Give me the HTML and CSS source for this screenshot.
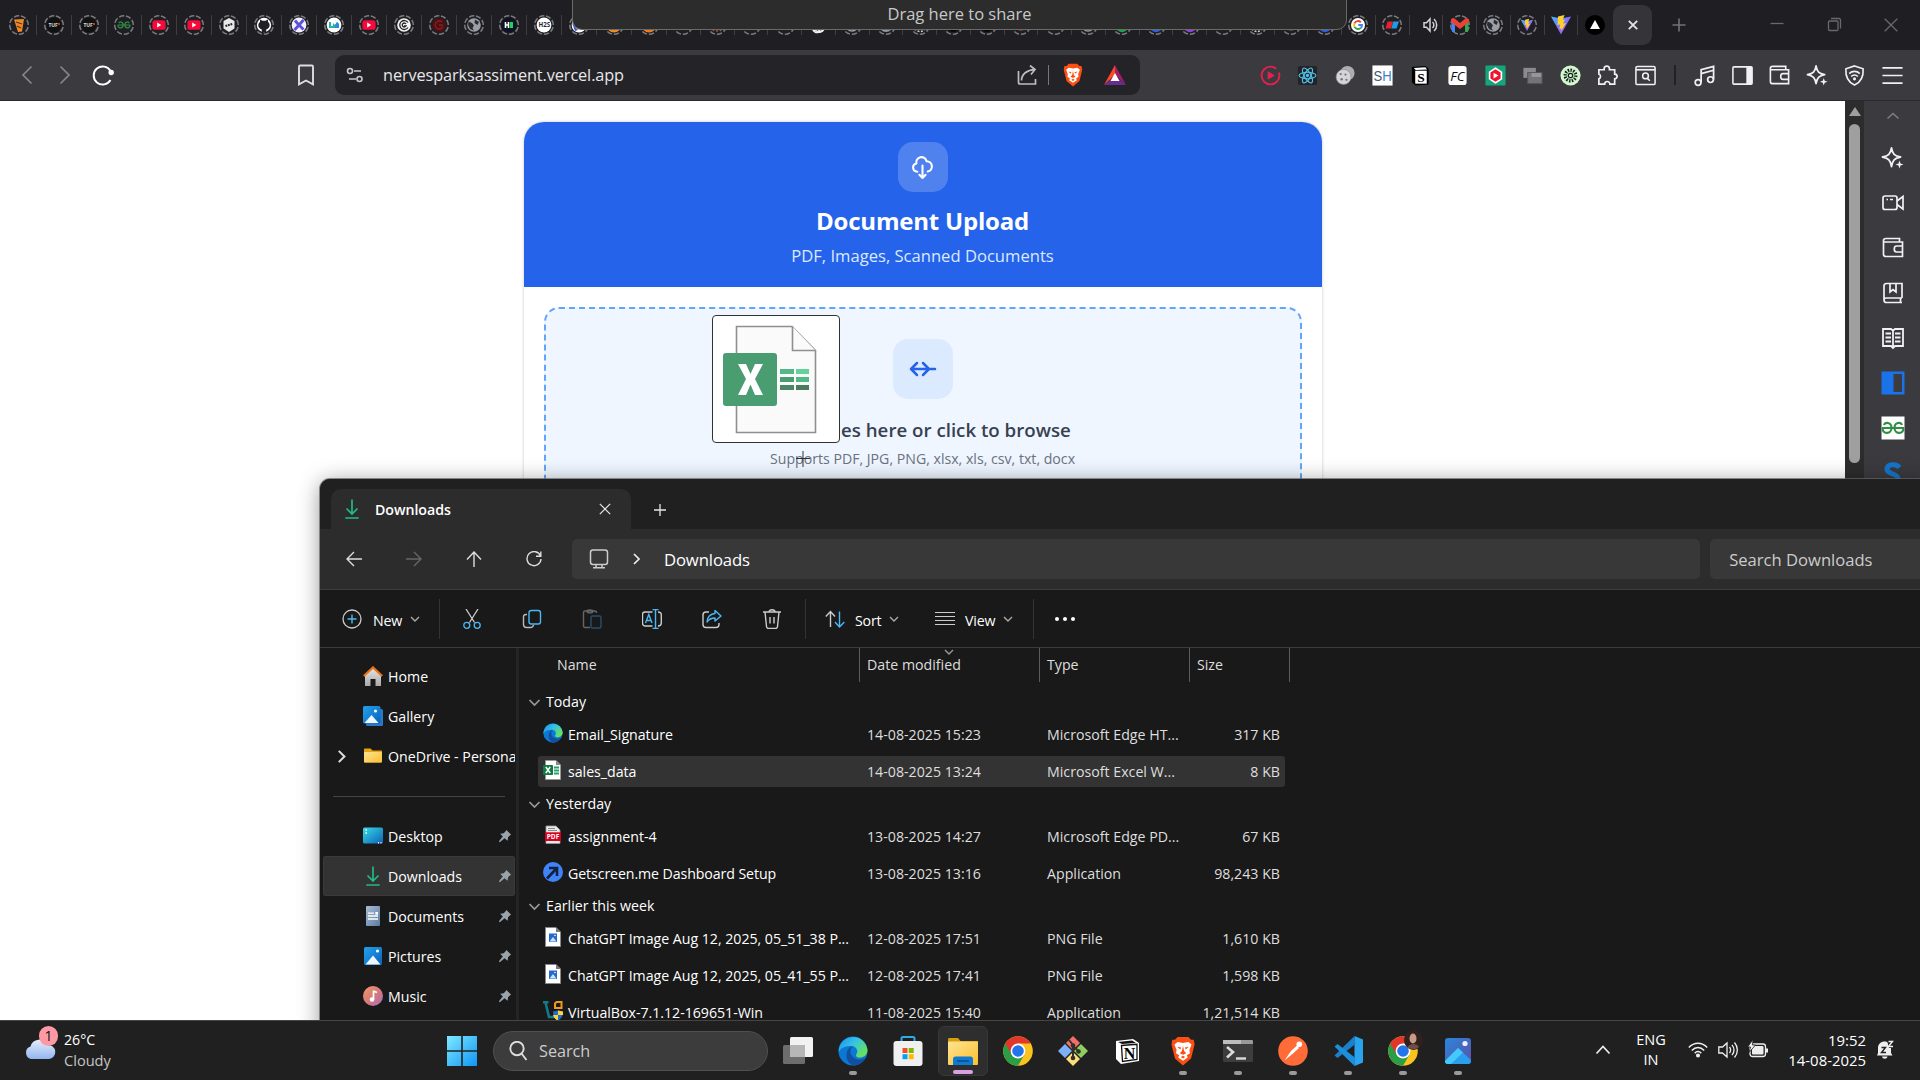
FILE: index.html
```html
<!DOCTYPE html>
<html lang="en">
<head>
<meta charset="utf-8">
<title>Document Upload</title>
<link rel="stylesheet" href="styles.css">
</head>
<body>
<svg class="defs" width="0" height="0" aria-hidden="true">
  <defs>
    <linearGradient id="gEdge" x1="0" y1="0" x2="1" y2=".6"><stop offset="0" stop-color="#1b8fe0"/><stop offset=".5" stop-color="#35c1e8"/><stop offset="1" stop-color="#66e35a"/></linearGradient>
    <linearGradient id="gBlue" x1="0" y1="0" x2="1" y2="1"><stop offset="0" stop-color="#22a2ee"/><stop offset="1" stop-color="#0a62b8"/></linearGradient>
    <linearGradient id="gDesk" x1="0" y1="0" x2="1" y2="1"><stop offset="0" stop-color="#37dbe6"/><stop offset="1" stop-color="#0b62b8"/></linearGradient>
    <linearGradient id="gFold" x1="0" y1="0" x2="1" y2="1"><stop offset="0" stop-color="#ffe394"/><stop offset="1" stop-color="#fbc02d"/></linearGradient>
    <linearGradient id="gDoc" x1="0" y1="0" x2="1" y2="1"><stop offset="0" stop-color="#a9bdd3"/><stop offset="1" stop-color="#5b7ba1"/></linearGradient>
    <linearGradient id="gMus" x1="0" y1="0" x2="1" y2="1"><stop offset="0" stop-color="#f29a66"/><stop offset=".5" stop-color="#d97a78"/><stop offset="1" stop-color="#a56bc0"/></linearGradient>
    <linearGradient id="gWin" x1="0" y1="0" x2="1" y2="1"><stop offset="0" stop-color="#7fe9ff"/><stop offset="1" stop-color="#1094f5"/></linearGradient>
    <linearGradient id="gVite" x1="0" y1="0" x2="1" y2="1"><stop offset="0" stop-color="#41b8ff"/><stop offset="1" stop-color="#bd34fe"/></linearGradient>
    <linearGradient id="gCloud" x1="0" y1="0" x2="0" y2="1"><stop offset="0" stop-color="#e4eefc"/><stop offset="1" stop-color="#93b5ef"/></linearGradient>
    <linearGradient id="gPho" x1="0" y1="0" x2="1" y2="1"><stop offset="0" stop-color="#2a86dc"/><stop offset="1" stop-color="#5d4fa6"/></linearGradient>
    <linearGradient id="gHouse" x1="0" y1="0" x2="0" y2="1"><stop offset="0" stop-color="#e6e6e6"/><stop offset="1" stop-color="#a8a8a8"/></linearGradient>
    <symbol id="ring" viewBox="-12 -12 24 24"><circle r="9.3" fill="none" stroke="#7b7b80" stroke-width="1.5" stroke-dasharray="5.3 2" transform="rotate(-78)"/></symbol>
    <symbol id="yt" viewBox="-12 -12 24 24"><use href="#ring" x="-12" y="-12" width="24" height="24"/><rect x="-6.6" y="-4.8" width="13.2" height="9.6" rx="2.6" fill="#f8093c"/><path d="M-1.8-2.4 2.3 0-1.8 2.4Z" fill="#fff"/></symbol>
    <symbol id="tuf" viewBox="-12 -12 24 24"><use href="#ring" x="-12" y="-12" width="24" height="24"/><circle r="7.6" fill="#111"/><text x="-5.6" y="2" font-size="5" font-weight="700" fill="#ddd" font-family="Open Sans,sans-serif">TUF</text><circle cx="5" cy="-1" r=".9" fill="#f55a2a"/></symbol>
    <symbol id="globe" viewBox="-12 -12 24 24"><use href="#ring" x="-12" y="-12" width="24" height="24"/><circle r="6.8" fill="#9aa0a6"/><path d="M-5.500-3.500-2-2 0 .5-1.500 3 0 5.800-4 4-6 0ZM1-5.500 5-3 3.500 0 .5-2Z" fill="#2a2a30"/></symbol>
    <symbol id="vite" viewBox="-12 -12 24 24"><path d="M-10-8.500 0 9.500 10-8.500 0-6.500Z" fill="url(#gVite)"/><path d="M3.500-10-3-8.500-3.500 0-.8-.6-1.600 4 .6 3.400-.4 7 5-2 2-1.500 4-5.500 1.800-5Z" fill="#ffd028"/></symbol>
    <symbol id="brave" viewBox="-12 -14 24 28"><path d="M-5-13H5L7.500-10.500 10-10.500 10.800-6 9.800-2 7.500 7 0 13.500-7.500 7-9.800-2-10.800-6-10-10.500-7.500-10.500Z" fill="#fb4f13"/><path d="M-8-6-5-8.500 0-7.500 5-8.500 8-6 6-1 6.500 2 3.500 4 4.500 6 0 9-4.500 6-3.500 4-6.500 2-6-1Z" fill="#fff"/><path d="M-5.500-4-1.800-3.200-2.500-1.500ZM5.500-4 1.800-3.200 2.500-1.500ZM0-5 1 0 3 2 0 3.500-3 2-1 0ZM-2 5.500 0 4.500 2 5.500 0 7Z" fill="#fb4f13"/></symbol>
    <symbol id="edge" viewBox="0 0 30 30"><circle cx="15" cy="15" r="14.500" fill="#0b78d6"/><path d="M.8 13A14.500 14.500 0 0 1 29.500 14c0 5-4 7.500-8 7.500-3.500 0-4-2-3-3.500 2.200-3.500-.5-7.800-5-8C7 9.600 2.500 12 .8 16Z" fill="url(#gEdge)"/><path d="M8.500 18c.5-5 4-7.500 6.500-7.800-4 2.800-3.500 10 3 12.800 3.500 1.300 7 .3 9.500-1.500C25 27 20 29.600 15.500 29.500 11 28.500 8 23.500 8.500 18Z" fill="#134f9f"/></symbol>
    <symbol id="chrome" viewBox="-15 -15 30 30"><circle r="14.800" fill="#fbc31c"/><path d="M-12.800-7.400A14.800 14.800 0 0 0 0 14.800L6.400 3.700 0 0Z" fill="#2a9d47"/><path d="M-12.800-7.400A14.800 14.800 0 0 1 12.800-7.400H0L-6.400 3.700Z" fill="#e0362c"/><circle r="7.400" fill="#fff"/><circle r="5.800" fill="#2374ea"/></symbol>
    <symbol id="star" viewBox="0 0 24 24"><path d="M10.500 2C11.500 8 13.500 10 19.500 11 13.500 12 11.500 14.500 10.500 20.500 9.500 14.500 7.500 12 1.500 11 7.500 10 9.500 8 10.500 2Z" fill="none" stroke="#f1f1f3" stroke-width="1.800" stroke-linejoin="round"/><path d="M18.500 14.500 19.500 17.500 22.500 18.500 19.500 19.500 18.500 22.500 17.500 19.500 14.500 18.500 17.500 17.500Z" fill="#f1f1f3"/></symbol>
    <symbol id="wallet" viewBox="0 0 24 24"><path d="M2.500 4.500C2.500 3 3.500 2.500 5 2.500H18.500V6H21.500V20.500H5C3.500 20.500 2.500 20 2.500 18.500ZM3 6H18.500M21.500 10H15.500C12.500 10 12.500 16 15.500 16H21.500" fill="none" stroke="#f1f1f3" stroke-width="1.700"/></symbol>
    <symbol id="gfg" viewBox="0 0 24 24"><path d="M1 12H23M10.500 12C10.500 5.500 4 6 3 9M13.500 12C13.500 5.500 20 6 21 9M1.500 12C2 19 10.500 18 10.500 12M22.500 12C22 19 13.500 18 13.500 12" fill="none" stroke="#2f8d46" stroke-width="2.100"/></symbol>
    <symbol id="down" viewBox="0 0 20 20"><path d="M10 .5V14.500M4.500 9.500 10 15 15.500 9.500M3.300 19H16.700" fill="none" stroke="#22b98b" stroke-width="1.700"/></symbol>
    <symbol id="pic" viewBox="0 0 20 20"><rect x="1" y="1" width="18" height="18" rx="1.500" fill="url(#gBlue)"/><path d="M2.500 18.500 10 9.500 17.500 18.500Z" fill="#eef7ff"/><circle cx="14.500" cy="5" r="1.600" fill="#fff"/></symbol>
    <symbol id="pin" viewBox="0 0 16 16"><path d="M9.500 1 15 6.500 13.500 7.500 11.500 9.500 11 13.500 7.500 10.500 2 15 1 14 5.500 8.500 2.500 5.500 6.500 4.800 8.500 2.800Z" fill="#9aa3aa"/></symbol>
    <symbol id="png" viewBox="0 0 20 20"><path d="M2.500.5H13L17.500 5V19.500H2.500Z" fill="#fff" stroke="#888"/><path d="M13 .5V5H17.500Z" fill="#777"/><rect x="6" y="6.500" width="8" height="8.500" fill="#2368cb"/><path d="M6.500 14.500 10 10 13.500 14.500Z" fill="#cbe5ff"/><circle cx="12" cy="8.500" r=".8" fill="#fff"/></symbol>
    <symbol id="chev" viewBox="0 0 12 12"><path d="M2 4 6 8 10 4" fill="none" stroke="currentColor" stroke-width="1.400"/></symbol>
  </defs>
</svg>

<main class="desktop">
  <section class="browser">
    <div class="tabstrip">
      <div class="tab"><svg viewBox="-12 -12 24 24"><use href="#ring" x="-12" y="-12" width="24" height="24"/><path d="M-5-5.500 5-6 3 6.500-1 7Z" fill="#f08a24"/><path d="M-3-3 3-1M-2 1 2 3" stroke="#5a3320" stroke-width="1.300"/></svg></div>
      <div class="tab"><svg><use href="#tuf"/></svg></div>
      <div class="tab"><svg><use href="#tuf"/></svg></div>
      <div class="tab"><svg viewBox="-12 -12 24 24"><use href="#ring" x="-12" y="-12" width="24" height="24"/><use href="#gfg" x="-7" y="-7" width="14" height="14"/></svg></div>
      <div class="tab"><svg><use href="#yt"/></svg></div>
      <div class="tab"><svg><use href="#yt"/></svg></div>
      <div class="tab"><svg viewBox="-12 -12 24 24"><use href="#ring" x="-12" y="-12" width="24" height="24"/><path d="M0-7 5.500-4V3.500L0 7-5.500 3.500V-4Z" fill="#e8e8e8"/><path d="M-3.500 1 3.500-1" stroke="#222" stroke-width="2" stroke-dasharray="1.800 .8"/></svg></div>
      <div class="tab"><svg viewBox="-12 -12 24 24"><use href="#ring" x="-12" y="-12" width="24" height="24"/><circle r="7.200" fill="#fff"/><path d="M-2.200 7V4.500C-7 3-6-2-4-3L-4-5.500-1.500-4.200H1.500L4-5.500 4-3C6-2 7 3 2.200 4.500V7Z" fill="#202025"/></svg></div>
      <div class="tab"><svg viewBox="-12 -12 24 24"><use href="#ring" x="-12" y="-12" width="24" height="24"/><circle r="7.400" fill="#f3f1ff"/><path d="M-4.500 5 4.500-5M-4-4.500-1-1M1 1 4.500 4.500" stroke="#5b50d8" stroke-width="2.800"/></svg></div>
      <div class="tab"><svg viewBox="-12 -12 24 24"><use href="#ring" x="-12" y="-12" width="24" height="24"/><circle r="7.400" fill="#fff"/><path d="M-5 3V-3H-3V1H-1V-2L1 0 3-3 5-1V3Z" fill="#27b3a8"/><path d="M1 0 3-3 5-1V3H1Z" fill="#2b8be0"/></svg></div>
      <div class="tab"><svg><use href="#yt"/></svg></div>
      <div class="tab"><svg viewBox="-12 -12 24 24"><use href="#ring" x="-12" y="-12" width="24" height="24"/><circle r="6.800" fill="#f4f4f4"/><path d="M4-2.500A4.500 4.500 0 1 0 4 2.500M2-1A2 2 0 1 0 2 1H0" fill="none" stroke="#222" stroke-width="1.300"/></svg></div>
      <div class="tab"><svg viewBox="-12 -12 24 24"><use href="#ring" x="-12" y="-12" width="24" height="24"/><circle r="7" fill="#4b1113"/><path d="M3-3A4 4 0 1 0 3 3V0H0" fill="none" stroke="#8c1c20" stroke-width="1.300"/></svg></div>
      <div class="tab"><svg><use href="#globe"/></svg></div>
      <div class="tab"><svg viewBox="-12 -12 24 24"><use href="#ring" x="-12" y="-12" width="24" height="24"/><circle r="7.500" fill="#0b1420"/><path d="M-3.500-3V3M-.5-3V3M-3.500 0H-.5" stroke="#fff" stroke-width="1.600"/><rect x="1" y="-3" width="3" height="6" fill="#21d35d"/></svg></div>
      <div class="tab"><svg viewBox="-12 -12 24 24"><use href="#ring" x="-12" y="-12" width="24" height="24"/><circle r="7.400" fill="#fff"/><text x="-5.600" y="2.400" font-size="6.200" font-weight="700" fill="#26263a" font-family="Open Sans,sans-serif">H2S</text></svg></div>
      <div class="tab"><svg viewBox="-12 -12 24 24"><use href="#ring" x="-12" y="-12" width="24" height="24"/><circle r="7.400" fill="#fff"/><path d="M-7-2-1 5-4 6Z" fill="#3b5bc4"/></svg></div>
      <div class="tab"><svg viewBox="-12 -12 24 24"><use href="#ring" x="-12" y="-12" width="24" height="24"/><circle r="7.400" fill="#f28b1e"/></svg></div>
      <div class="tab"><svg viewBox="-12 -12 24 24"><use href="#ring" x="-12" y="-12" width="24" height="24"/><circle r="7.400" fill="#ee7a1e"/></svg></div>
      <div class="tab slim"><svg><use href="#ring"/></svg></div>
      <div class="tab slim"><svg viewBox="-12 -12 24 24"><use href="#ring" x="-12" y="-12" width="24" height="24"/><path d="M0 0-4 6M0 0 0 7M0 0 4 6" stroke="#a4563b" stroke-width="1.500"/></svg></div>
      <div class="tab slim"><svg><use href="#ring"/></svg></div>
      <div class="tab slim"><svg viewBox="-12 -12 24 24"><use href="#ring" x="-12" y="-12" width="24" height="24"/><rect x="-6" y="-5" width="12" height="10" rx="2" fill="#b93a55"/></svg></div>
      <div class="tab slim"><svg viewBox="-12 -12 24 24"><path d="M-5 3A4 4 0 0 0 1 7 4 4 0 0 0 6 3M-2 3 2 6M-5 0A6 6 0 0 0 5 5" fill="none" stroke="#eee" stroke-width="1.500"/></svg></div>
      <div class="tab slim"><svg><use href="#globe"/></svg></div>
      <div class="tab slim"><svg viewBox="-12 -12 24 24"><use href="#ring" x="-12" y="-12" width="24" height="24"/><circle r="7" fill="#8d99a4"/><circle cx="-1" cy="1" r="4" fill="#202025"/></svg></div>
      <div class="tab slim"><svg viewBox="-12 -12 24 24"><use href="#ring" x="-12" y="-12" width="24" height="24"/><circle r="6.500" fill="none" stroke="#ccc" stroke-width="1.500" stroke-dasharray="2 1.500"/></svg></div>
      <div class="tab slim"><svg viewBox="-12 -12 24 24"><use href="#ring" x="-12" y="-12" width="24" height="24"/><circle r="7" fill="#080808"/></svg></div>
      <div class="tab slim"><svg viewBox="-12 -12 24 24"><use href="#ring" x="-12" y="-12" width="24" height="24"/><circle r="7" fill="#080808"/></svg></div>
      <div class="tab slim"><svg viewBox="-12 -12 24 24"><use href="#ring" x="-12" y="-12" width="24" height="24"/><circle r="5.500" fill="#ad6c43"/></svg></div>
      <div class="tab slim"><svg><use href="#ring"/></svg></div>
      <div class="tab slim"><svg viewBox="-12 -12 24 24"><use href="#ring" x="-12" y="-12" width="24" height="24"/><circle r="6" fill="none" stroke="#999" stroke-width="1.500"/></svg></div>
      <div class="tab slim"><svg viewBox="-12 -12 24 24"><use href="#ring" x="-12" y="-12" width="24" height="24"/><circle r="7.200" fill="#1aa64a"/></svg></div>
      <div class="tab slim"><svg viewBox="-12 -12 24 24"><use href="#ring" x="-12" y="-12" width="24" height="24"/><circle r="7.200" fill="#2b62e6"/></svg></div>
      <div class="tab slim"><svg viewBox="-12 -12 24 24"><use href="#ring" x="-12" y="-12" width="24" height="24"/><circle r="7.200" fill="#9a3be8"/></svg></div>
      <div class="tab slim"><svg><use href="#ring"/></svg></div>
      <div class="tab slim"><svg viewBox="-12 -12 24 24"><use href="#ring" x="-12" y="-12" width="24" height="24"/><circle r="6.500" fill="none" stroke="#ccc" stroke-width="1.500" stroke-dasharray="2 1.500"/></svg></div>
      <div class="tab slim"><svg viewBox="-12 -12 24 24"><use href="#ring" x="-12" y="-12" width="24" height="24"/><circle r="5.500" fill="#ad6c43"/></svg></div>
      <div class="tab slim"><svg viewBox="-12 -12 24 24"><use href="#ring" x="-12" y="-12" width="24" height="24"/><circle r="7.200" fill="#2b62e6"/></svg></div>
      <div class="tab slim"><svg viewBox="-12 -12 24 24"><use href="#ring" x="-12" y="-12" width="24" height="24"/><circle r="7" fill="#fff"/><g fill="none" stroke-width="1.900"><path d="M2.800-2.800A4 4 0 0 0-3.600-1.700" stroke="#ea4335"/><path d="M-3.600-1.700A4 4 0 0 0-3.400 2" stroke="#fbbc05"/><path d="M-3.400 2A4 4 0 0 0 2.700 3" stroke="#34a853"/><path d="M2.700 3A4 4 0 0 0 4 0H.3" stroke="#4285f4"/></g></svg></div>
      <div class="tab slim"><svg viewBox="-12 -12 24 24"><use href="#ring" x="-12" y="-12" width="24" height="24"/><path d="M-4.500-3.500H1L-1 3.500H-6.500Z" fill="#e3222c"/><path d="M1.300-3.500H7L4.500 3.500H-.7Z" fill="#1c9be6"/></svg></div>
      <div class="tab slim audio"><svg viewBox="-12 -12 24 24" fill="none" stroke="#d2d2d6" stroke-width="1.500"><path d="M-6-2.200H-3.500L0-6V6L-3.500 2.200H-6ZM2.500-3A4 4 0 0 1 2.500 3M4-6A8 8 0 0 1 4 6"/></svg></div>
      <div class="tab slim"><svg viewBox="-12 -12 24 24"><use href="#ring" x="-12" y="-12" width="24" height="24"/><path d="M-9-5-5-2V7H-8Z" fill="#4285f4"/><path d="M9-5 5-2V7H8Z" fill="#34a853"/><path d="M-9-6-6-7 0-2 6-7 9-6V-3L0 4-9-3Z" fill="#ea4335"/></svg></div>
      <div class="tab slim"><svg><use href="#globe"/></svg></div>
      <div class="tab slim"><svg viewBox="-12 -12 24 24"><use href="#ring" x="-12" y="-12" width="24" height="24"/><use href="#vite" x="-7.500" y="-7.500" width="15" height="15"/></svg></div>
      <div class="tab slim"><svg><use href="#vite"/></svg></div>
      <div class="tab slim last"><svg viewBox="-12 -12 24 24"><circle r="10" fill="#000"/><path d="M0-5 5 4H-5Z" fill="#fff"/></svg></div>
      <div class="tab active"><svg viewBox="-12 -12 24 24"><path d="M-4.200-4.200 4.200 4.200M4.200-4.200-4.200 4.200" stroke="#e2e2e5" stroke-width="1.900"/></svg></div>
      <div class="newtab"><svg viewBox="-12 -12 24 24"><path d="M-6.500 0H6.500M0-6.500V6.500" stroke="#737377" stroke-width="1.600"/></svg></div>
      <div class="winctl"><svg viewBox="-12 -12 24 24"><path d="M-6.500-1.500H6.500" stroke="#68686d" stroke-width="1.300"/></svg><svg viewBox="-12 -12 24 24" fill="none" stroke="#68686d" stroke-width="1.300"><rect x="-5.500" y="-4" width="9.500" height="9.500" rx="1"/><path d="M-3-6.500H5C6 -6.500 6.500-6 6.500-5V3.500"/></svg><svg viewBox="-12 -12 24 24"><path d="M-6.300-6.300 6.300 6.300M6.300-6.300-6.300 6.300" stroke="#68686d" stroke-width="1.300"/></svg></div>
    </div>

    <div class="toolbar">
      <div class="nav-buttons">
        <svg viewBox="-12 -12 24 24"><path d="M4.500-8.500-4 0 4.500 8.500" fill="none" stroke="#85858a" stroke-width="1.700"/></svg>
        <svg viewBox="-12 -12 24 24"><path d="M-4.500-8.500 4 0-4.500 8.500" fill="none" stroke="#85858a" stroke-width="1.700"/></svg>
        <svg viewBox="-12 -12 24 24"><path d="M7.500-4A9 9 0 1 0 7.500 5" fill="none" stroke="#fff" stroke-width="2"/><circle cx="8.200" cy="-2.500" r="2.700" fill="#fff"/></svg>
        <svg class="bookmark" viewBox="-12 -12 24 24"><path d="M-6-9.500H6C7-9.500 7-9 7-8V9.300L0 5.500-7 9.300V-8C-7-9-7-9.500-6-9.500Z" fill="none" stroke="#dedee2" stroke-width="1.900"/></svg>
      </div>
      <div class="urlbar">
        <svg class="site" viewBox="0 0 20 20" fill="none" stroke="#c8c8cc" stroke-width="1.600"><circle cx="5" cy="6" r="2.500"/><path d="M9 6H16M4 14H11"/><circle cx="14.500" cy="14" r="2.500"/></svg>
        <span class="url">nervesparksassiment.vercel.app</span>
        <svg class="share" viewBox="0 0 20 20" fill="none" stroke="#bdbdc2" stroke-width="1.700"><path d="M1.500 6V17C1.500 18.500 2 19 3 19H18.500V14M4.500 15.500C4.500 9 10 5 18 4.500M13 .5 18 4.500 14 9.500"/></svg>
        <i class="vsep"></i>
        <svg class="lion"><use href="#brave"/></svg>
        <svg class="bat" viewBox="0 0 24 24"><path d="M12 2 1 22 12 12Z" fill="#ff4724"/><path d="M12 2 23 22 12 12Z" fill="#9e1f63"/><path d="M1 22H23L12 13Z" fill="#662d91"/><path d="M12 10 16.500 18H7.500Z" fill="#fff"/></svg>
      </div>
      <div class="extensions">
        <span><svg viewBox="0 0 24 24"><circle cx="12" cy="12" r="9.300" fill="none" stroke="#e3204f" stroke-width="2" stroke-dasharray="50 5"/><path d="M9 7.500 16.500 12 9 16.500Z" fill="#e3204f"/></svg></span>
        <span><svg viewBox="0 0 24 24"><rect x="2" y="2" width="20" height="20" rx="2" fill="#23232a"/><g fill="none" stroke="#4fc3e8" stroke-width="1.200"><ellipse cx="12" cy="12" rx="8.800" ry="3.400"/><ellipse cx="12" cy="12" rx="8.800" ry="3.400" transform="rotate(60 12 12)"/><ellipse cx="12" cy="12" rx="8.800" ry="3.400" transform="rotate(120 12 12)"/></g><circle cx="12" cy="12" r="1.700" fill="#4fc3e8"/></svg></span>
        <span><svg viewBox="0 0 24 24"><circle cx="14" cy="9.500" r="7.500" fill="#aeaeb0"/><circle cx="10" cy="13.500" r="7.800" fill="#d5d5d7" stroke="#8a8a8e" stroke-width=".6"/><g fill="#77777b"><circle cx="7" cy="10.500" r="1.200"/><circle cx="12" cy="11" r="1.200"/><circle cx="8" cy="16" r="1.300"/><circle cx="13" cy="16.500" r="1.200"/></g></svg></span>
        <span><svg viewBox="0 0 24 24"><rect x="1.500" y="1.500" width="21" height="21" fill="#fff"/><text x="12" y="18" text-anchor="middle" font-size="16" textLength="19" lengthAdjust="spacingAndGlyphs" fill="#44586c" font-family="Liberation Sans,sans-serif">S<tspan fill="#3f7fc1">H</tspan></text></svg></span>
        <span><svg viewBox="0 0 24 24"><path d="M3 3 17 2 20.500 5V21.500L7 22.500 3 19Z" fill="#000"/><rect x="6.500" y="7" width="12" height="13.500" fill="#fff"/><path d="M5 4.200 17 3.500 19 5.700 7 6.200Z" fill="#fff"/><text x="12.500" y="18.700" text-anchor="middle" font-size="14" font-weight="700" font-family="Liberation Serif,serif">S</text></svg></span>
        <span><svg viewBox="0 0 24 24"><rect x="2.500" y="2" width="19" height="20" rx="3" fill="#fff"/><text x="12" y="17.500" text-anchor="middle" font-size="14" font-style="italic" fill="#111" font-family="Open Sans,sans-serif">FC</text></svg></span>
        <span><svg viewBox="0 0 24 24"><rect x="1.500" y="1.500" width="21" height="21" rx="1" fill="#16a47d"/><path d="M12 3.500 19 8V16L12 20.500 5 16V8Z" fill="#fff"/><path d="M12 5.500 17.300 8.800V15.200L12 18.500 6.700 15.200V8.800Z" fill="#f0142e"/><path d="M10 9 15 12 10 15Z" fill="#fff"/></svg></span>
        <span><svg viewBox="0 0 24 24"><rect x="2.500" y="4" width="13" height="10.500" fill="#8b8b8d"/><rect x="7" y="9" width="15" height="11.500" fill="#747476" stroke="#555" stroke-width="1"/><rect x="11" y="9.500" width="10" height="4" fill="#98989a"/></svg></span>
        <span><svg viewBox="0 0 24 24"><circle cx="12" cy="12" r="10.500" fill="#d3f5d0"/><circle cx="12" cy="12" r="5.500" fill="none" stroke="#14231a" stroke-width="3.500" stroke-dasharray="1.500 1.300"/><circle cx="12" cy="12" r="2.300" fill="none" stroke="#14231a" stroke-width="1.300"/></svg></span>
        <span><svg viewBox="0 0 24 24"><path d="M3 6H8.500V4.500A2.800 2.800 0 0 1 14 4.500V6H19.500V10.500A2.300 2.300 0 0 1 19.500 15.500V21H14.500A2.500 2.500 0 0 0 9 21H3V15.500A2.700 2.700 0 0 0 3 10.500Z" fill="none" stroke="#f1f1f3" stroke-width="1.800"/></svg></span>
        <span><svg viewBox="0 0 24 24"><rect x="2" y="2.500" width="20" height="19" rx="1.500" fill="none" stroke="#f1f1f3" stroke-width="1.600"/><path d="M2 6H22" stroke="#f1f1f3" stroke-width="1.800"/><circle cx="12" cy="12.500" r="3" fill="none" stroke="#f1f1f3" stroke-width="1.600"/><path d="M14 15 16.500 17.500" stroke="#f1f1f3" stroke-width="1.600"/></svg></span>
        <i class="tsep"></i>
        <span><svg viewBox="0 0 24 24" fill="none" stroke="#f1f1f3" stroke-width="1.800"><path d="M8.500 19V6L21.500 2.500V16M8.500 10 21.500 6.500"/><circle cx="5.300" cy="19.300" r="3"/><circle cx="18.300" cy="16.300" r="3"/></svg></span>
        <span><svg viewBox="0 0 24 24"><rect x="2" y="3" width="20" height="18" rx="1" fill="none" stroke="#f1f1f3" stroke-width="1.600"/><rect x="16" y="3" width="6" height="18" fill="#f1f1f3"/></svg></span>
        <span><svg><use href="#wallet"/></svg></span>
        <span><svg><use href="#star"/></svg></span>
        <span><svg viewBox="0 0 24 24" fill="none" stroke="#f1f1f3" stroke-width="1.700"><path d="M12 2 21 5C21.500 13 19 19 12 22 5 19 2.500 13 3 5Z"/><path d="M6.500 10C9.500 7 14.500 7 17.500 10M8.500 13C10.500 11 13.500 11 15.500 13"/><circle cx="12" cy="15.500" r=".8"/></svg></span>
        <span><svg viewBox="0 0 24 24"><path d="M1.500 4H22.500M1.500 12H22.500M1.500 20H22.500" stroke="#f1f1f3" stroke-width="1.700"/></svg></span>
      </div>
    </div>

    <div class="viewport">
      <div class="page">
        <div class="card">
          <header class="card-head">
            <div class="head-icon"><svg viewBox="0 0 24 24" fill="none" stroke="#fff" stroke-width="2" stroke-linecap="round" stroke-linejoin="round"><path d="M7 16a4 4 0 0 1-.88-7.903A5 5 0 1 1 15.900 6H16a5 5 0 0 1 1 9.900M9 19l3 3m0 0 3-3m-3 3V10"/></svg></div>
            <h1>Document Upload</h1>
            <p>PDF, Images, Scanned Documents</p>
          </header>
          <div class="dropzone">
            <div class="drop-icon"><svg viewBox="0 0 28 24" fill="none" stroke="#2563eb" stroke-width="2.500" stroke-linecap="round" stroke-linejoin="round"><path d="M2 12H26M8 6 2 12 8 18M14 6 20 12 14 18"/></svg></div>
            <p class="drop-title">Drop files here or click to browse</p>
            <p class="drop-hint">Supports PDF, JPG, PNG, xlsx, xls, csv, txt, docx</p>
          </div>
        </div>
      </div>
      <div class="scroll"><i class="arrow"></i><i class="thumb"></i></div>
      <aside class="side">
        <svg class="up" viewBox="0 0 24 24"><path d="M6.500 14.500 12 9.500 17.500 14.500" fill="none" stroke="#7e7e83" stroke-width="1.500"/></svg>
        <svg><use href="#star"/></svg>
        <svg viewBox="0 0 24 24" fill="none" stroke="#f1f1f3" stroke-width="1.700"><rect x="2" y="5" width="14" height="13.500" rx="2"/><path d="M16 10 22 5.500V18L16 13.500M5.500 8.500H7M9 8.500H12"/></svg>
        <svg><use href="#wallet"/></svg>
        <svg viewBox="0 0 24 24" fill="none" stroke="#f1f1f3" stroke-width="1.700"><path d="M21 17V2.500H5.500C4 2.500 3 3.500 3 5V19C3 20.500 4 21.500 5.500 21.500H21M3 19C3 17.500 4 17 5.500 17H21M19.500 17V21.500M9 2.500V11L12 8.500 15 11V2.500"/></svg>
        <svg viewBox="0 0 24 24" fill="none" stroke="#f1f1f3" stroke-width="1.800"><path d="M2 3H10L12 4.500 14 3H22V20H14L12 22 10 20H2ZM12 4V22M4.500 7.500H10M4.500 11.500H10M4.500 15.500H10M14 7.500H19.500M14 11.500H19.500M14 15.500H19.500"/></svg>
        <svg viewBox="0 0 24 24"><rect x=".5" y=".5" width="23" height="23" fill="#1a73e8"/><rect x="12.500" y="3" width="8.500" height="18" fill="#3b3b40"/></svg>
        <svg viewBox="0 0 24 24"><rect x=".5" y=".5" width="23" height="23" fill="#fff"/><use href="#gfg" width="24" height="24"/></svg>
        <svg class="s" viewBox="0 0 24 24"><path d="M18.500 5.500C15 1 6 2 6 7.500 6 12.500 17 11 17 16.500 17 21 9 22 5 17.500" fill="none" stroke="#1674c9" stroke-width="5"/></svg>
      </aside>
    </div>
  </section>

  <div class="share-drop">Drag here to share</div>

  <div class="drag-ghost">
    <svg viewBox="0 0 128 128"><path d="M24.500 11.500H80L103.500 35.500V117.500H24.500Z" fill="#fafafa" stroke="#8f8f8f" stroke-width="1.600"/><path d="M80.500 11.500V35.500H103.500" fill="#fafafa" stroke="#8f8f8f" stroke-width="1.600"/><rect x="11" y="38" width="54" height="53" rx="3" fill="#4a9d71"/><path d="M26 49H34L38.500 59 43 49H51L43 64 51 80H43L38.500 69.500 34 80H26L34 64Z" fill="#fff"/><g><rect x="68" y="54" width="14" height="5" fill="#53b888"/><rect x="84" y="54" width="13" height="5" fill="#64d19c"/><rect x="68" y="62" width="14" height="5" fill="#4a9d71"/><rect x="84" y="62" width="13" height="5" fill="#53b888"/><rect x="68" y="70" width="14" height="5" fill="#4d8568"/><rect x="84" y="70" width="13" height="5" fill="#4b7a60"/></g></svg>
  </div>
  <svg class="cursor" viewBox="0 0 16 16"><path d="M8 0V16M1 7.500H15" stroke="#333" stroke-width="1"/></svg>

  <section class="explorer">
    <div class="ex-tabs">
      <div class="ex-tab"><svg class="i20"><use href="#down"/></svg><b>Downloads</b><svg class="close" viewBox="0 0 12 12"><path d="M.8.8 11.200 11.200M11.200.8.8 11.200" stroke="#e6e6e6" stroke-width="1.200"/></svg></div>
      <svg class="plus" viewBox="0 0 12 12"><path d="M6 0V12M0 6H12" stroke="#e6e6e6" stroke-width="1.300"/></svg>
    </div>
    <div class="ex-nav">
      <span><svg viewBox="0 0 16 16"><path d="M16 8H1.500M8 1 1 8 8 15" fill="none" stroke="#ddd" stroke-width="1.400"/></svg></span>
      <span><svg viewBox="0 0 16 16"><path d="M0 8H14.500M8 1 15 8 8 15" fill="none" stroke="#666" stroke-width="1.400"/></svg></span>
      <span><svg viewBox="0 0 16 16"><path d="M8 16V1.500M1 8.500 8 1 15 8.500" fill="none" stroke="#ddd" stroke-width="1.400"/></svg></span>
      <span><svg viewBox="0 0 16 16"><path d="M14.500 5A7 7 0 1 0 15 8M14.800.5V5.300H10" fill="none" stroke="#ddd" stroke-width="1.400"/></svg></span>
      <div class="address"><svg class="i20" viewBox="0 0 20 20" fill="none" stroke="#ccc" stroke-width="1.500"><rect x="1.500" y="1" width="17" height="14.500" rx="2.500"/><path d="M7 15.500V18.500M13 15.500V18.500M4 18.800H16"/></svg><svg class="crumb" viewBox="0 0 12 12"><path d="M4 1 9 6 4 11" fill="none" stroke="#eee" stroke-width="1.700"/></svg><em>Downloads</em></div>
      <div class="search">Search Downloads</div>
    </div>
    <div class="ex-cmd">
      <div class="grp new"><svg class="i20" viewBox="0 0 20 20" fill="none"><circle cx="10" cy="10" r="9" stroke="#ccc" stroke-width="1.300"/><path d="M10 5.500V14.500M5.500 10H14.500" stroke="#4cb8f5" stroke-width="1.400"/></svg><label>New</label><svg class="c"><use href="#chev"/></svg></div>
      <i class="bar"></i>
      <span class="first"><svg viewBox="0 0 20 20" fill="none" stroke-width="1.300"><path d="M4 0 12.500 13.500M16 0 7.500 13.500" stroke="#ccc"/><circle cx="4.800" cy="16.300" r="3" stroke="#4cb8f5"/><circle cx="15.200" cy="16.300" r="3" stroke="#4cb8f5"/></svg></span>
      <span><svg viewBox="0 0 20 20" fill="none" stroke-width="1.400"><path d="M5 5.500H4C2 5.500 1.500 6.500 1.500 8V15.500C1.500 17.500 2.500 18.500 4.500 18.500H8.500C10.500 18.500 11.300 17.500 11.500 16" stroke="#bbb"/><rect x="7" y="1.500" width="11.500" height="13.500" rx="2.300" stroke="#4cb8f5"/></svg></span>
      <span><svg viewBox="0 0 20 20" fill="none" stroke-width="1.400"><path d="M8 18.500H3C2 18.500 1.500 18 1.500 17V3.500C1.500 2.500 2 2 3 2H13C14 2 14.500 2.500 14.500 4M5 2C5 .5 11 .5 11 2 11 4.500 5 4.500 5 2Z" stroke="#666"/><rect x="9" y="7" width="10" height="12" rx="1.500" stroke="#24506b"/></svg></span>
      <span><svg viewBox="0 0 20 20" fill="none" stroke-width="1.400"><path d="M10.500 3H3C1 3 .5 4 .5 5.500V14C.5 16 1.500 17 3 17H10.500M16 3C18.500 3 19.300 4 19.300 6V14C19.300 16 18.500 17 16 17" stroke="#ccc"/><path d="M13.500 0V20M10.500.5H16.500M10.500 19.500H16.500M3.500 14 6.800 5.500 10 14M4.500 11.500H9" stroke="#4cb8f5"/></svg></span>
      <span><svg viewBox="0 0 20 20" fill="none" stroke-width="1.400"><path d="M7 3H4C2 3 1 4 1 6V15.500C1 17.500 2 18.500 4 18.500H14C16 18.500 17 17.500 17 15.500V14" stroke="#ccc"/><path d="M13 1.500 19 7 13 12V9C9.500 9 7 10 5 13 5 8 8.500 4.700 13 4.500Z" stroke="#4cb8f5" stroke-linejoin="round"/></svg></span>
      <span><svg viewBox="0 0 20 20" fill="none" stroke="#ccc" stroke-width="1.400"><path d="M1 3H19M7 3C7 0 13 0 13 3M3 3 4.500 17.500C4.700 19 5.500 19.500 6.500 19.500H13.500C14.500 19.500 15.300 19 15.500 17.500L17 3M8 8V14.500M12 8V14.500"/></svg></span>
      <i class="bar b2"></i>
      <div class="grp sort"><svg class="i20" viewBox="0 0 20 20" fill="none" stroke-width="1.400"><path d="M5.500 18V2.500M.8 7.500 5.500 2.500 10 7.500" stroke="#ccc"/><path d="M14.500 2.500V18M10 13 14.500 18 19.300 13" stroke="#4cb8f5"/></svg><label>Sort</label><svg class="c"><use href="#chev"/></svg></div>
      <div class="grp view"><svg class="i20" viewBox="0 0 20 20"><path d="M0 3.500H20M0 7.500H20M0 11.500H20M0 15.500H20" stroke="#ccc" stroke-width="1.200"/></svg><label>View</label><svg class="c"><use href="#chev"/></svg></div>
      <i class="bar"></i>
      <span class="more"><svg viewBox="0 0 20 20" fill="#fff"><circle cx="2" cy="10" r="2"/><circle cx="10" cy="10" r="2"/><circle cx="18" cy="10" r="2"/></svg></span>
    </div>
    <div class="ex-body">
      <nav class="places">
        <div class="place"><i></i><svg viewBox="0 0 20 20"><path d="M2 9 10 2 18 9V20H12.500V13H7.500V20H2Z" fill="url(#gHouse)"/><path d="M.8 10 10 1.500 19.200 10" fill="none" stroke="#ea7316" stroke-width="2.300"/></svg><span>Home</span></div>
        <div class="place"><i></i><svg viewBox="0 0 20 20"><rect x="3" y="3" width="17" height="17" rx="1.500" fill="#2b78c4"/><rect x="0" y="0" width="17.500" height="17.500" rx="1.500" fill="url(#gBlue)"/><path d="M1.500 17 8.500 9 15.500 17Z" fill="#eef7ff"/><circle cx="12.500" cy="5" r="1.500" fill="#fff"/></svg><span>Gallery</span></div>
        <div class="place"><i><svg class="exp" viewBox="0 0 12 12"><path d="M3.500.8 8.700 6 3.500 11.200" fill="none" stroke="#ddd" stroke-width="1.900"/></svg></i><svg viewBox="0 0 20 20"><path d="M1 3.500C1 2.800 1.500 2.500 2 2.500H7.500L9.500 4.500H18C18.700 4.500 19 5 19 5.500V15C19 16 18.500 16.500 18 16.500H2C1.300 16.500 1 16 1 15.500Z" fill="#e8a317"/><rect x="1" y="6" width="18" height="10.500" rx="1" fill="url(#gFold)"/></svg><span>OneDrive - Persona</span></div>
        <hr>
        <div class="place"><i></i><svg viewBox="0 0 20 20"><rect y="1.500" width="20" height="16" rx="1.500" fill="url(#gDesk)"/><path d="M2.500 4H4M2.500 7H4M15 16.800H16M17.500 16.800H18.500" stroke="#fff" stroke-width="1.500"/></svg><span>Desktop</span><svg class="pin"><use href="#pin"/></svg></div>
        <div class="place on"><i></i><svg><use href="#down"/></svg><span>Downloads</span><svg class="pin"><use href="#pin"/></svg></div>
        <div class="place"><i></i><svg viewBox="0 0 20 20"><rect x="3" width="14" height="20" rx="1" fill="url(#gDoc)"/><path d="M5 7.200H11M5 10H15M5 13H15" stroke="#fff" stroke-width="1.300"/><rect x="12.300" y="6" width="2.700" height="2.700" fill="#fff"/></svg><span>Documents</span><svg class="pin"><use href="#pin"/></svg></div>
        <div class="place"><i></i><svg><use href="#pic"/></svg><span>Pictures</span><svg class="pin"><use href="#pin"/></svg></div>
        <div class="place"><i></i><svg viewBox="0 0 20 20"><circle cx="10" cy="10" r="10" fill="url(#gMus)"/><path d="M10.500 4.500V13.500M10.500 5 14 6.500" stroke="#fff" stroke-width="1.700"/><circle cx="9" cy="13.500" r="2.300" fill="#fff"/></svg><span>Music</span><svg class="pin"><use href="#pin"/></svg></div>
      </nav>
      <div class="files">
        <div class="cols"><div class="nm">Name</div><div>Date modified<svg class="sortmark"><use href="#chev"/></svg></div><div>Type</div><div>Size</div></div>
        <div class="group"><svg><use href="#chev"/></svg>Today</div>
        <div class="row"><div class="nm"><svg><use href="#edge"/></svg>Email_Signature</div><div>14-08-2025 15:23</div><div>Microsoft Edge HT...</div><div class="sz">317 KB</div></div>
        <div class="row on"><div class="nm"><svg viewBox="0 0 20 20"><path d="M2.500.5H13L17.500 5V19.500H2.500Z" fill="#fff" stroke="#999"/><path d="M13 .5V5H17.500Z" fill="#888"/><path d="M11 7.500H16M11 10.500H16M11 13.500H16" stroke="#26a269" stroke-width="2"/><rect x="0" y="5" width="10" height="10" rx=".8" fill="#107c41"/><path d="M2.800 7 7.200 13M7.200 7 2.800 13" stroke="#fff" stroke-width="1.500"/></svg>sales_data</div><div>14-08-2025 13:24</div><div>Microsoft Excel W...</div><div class="sz">8 KB</div></div>
        <div class="group"><svg><use href="#chev"/></svg>Yesterday</div>
        <div class="row"><div class="nm"><svg viewBox="0 0 20 20"><path d="M3 1H13L17 5V18.500H3Z" fill="#e9e9e9" stroke="#999" stroke-width=".8"/><path d="M5 3.500H12M5 5.500H14" stroke="#888"/><rect x="2" y="7.300" width="16" height="8.700" fill="#d8001d"/><text x="10" y="14" text-anchor="middle" font-size="6.500" font-weight="700" fill="#fff" font-family="Open Sans,sans-serif">PDF</text></svg>assignment-4</div><div>13-08-2025 14:27</div><div>Microsoft Edge PD...</div><div class="sz">67 KB</div></div>
        <div class="row"><div class="nm tight"><svg viewBox="0 0 20 20"><circle cx="10" cy="10" r="10" fill="#3f83f8"/><path d="M6 6H14V14M14 6 4 16.500" fill="none" stroke="#14213d" stroke-width="2.600"/></svg>Getscreen.me Dashboard Setup</div><div>13-08-2025 13:16</div><div>Application</div><div class="sz">98,243 KB</div></div>
        <div class="group"><svg><use href="#chev"/></svg>Earlier this week</div>
        <div class="row"><div class="nm"><svg><use href="#png"/></svg>ChatGPT Image Aug 12, 2025, 05_51_38 P...</div><div>12-08-2025 17:51</div><div>PNG File</div><div class="sz">1,610 KB</div></div>
        <div class="row"><div class="nm"><svg><use href="#png"/></svg>ChatGPT Image Aug 12, 2025, 05_41_55 P...</div><div>12-08-2025 17:41</div><div>PNG File</div><div class="sz">1,598 KB</div></div>
        <div class="row"><div class="nm"><svg viewBox="0 0 20 20"><path d="M0 1.300H5.500M2.500 1.500 6 16H11" fill="none" stroke="#12788c" stroke-width="2.600"/><path d="M12 7V2.500L13.500 1H18.500V7Z" fill="none" stroke="#f09a1b" stroke-width="2"/><path d="M10 10.500 15 9.500 20 10.500C20 15 18 18 15 19.500 12 18 10 15 10 10.500Z" fill="#1f6fd0"/><path d="M15 9.500 20 10.500V14H15ZM10 14H15V19.500C12.500 18.500 10.500 16.500 10 14Z" fill="#ffd33b"/></svg>VirtualBox-7.1.12-169651-Win</div><div>11-08-2025 15:40</div><div>Application</div><div class="sz">1,21,514 KB</div></div>
      </div>
    </div>
  </section>
</main>

<footer class="taskbar">
  <div class="weather">
    <div class="wicon"><svg viewBox="0 0 32 24"><path d="M7 23A6.500 6.500 0 0 1 6.500 10.500 9 9 0 0 1 23.500 9 7 7 0 0 1 25 23Z" fill="url(#gCloud)"/></svg><span class="badge">1</span></div>
    <div class="wtext"><strong>26°C</strong><span>Cloudy</span></div>
  </div>
  <div class="apps">
    <svg class="start" viewBox="0 0 30 30"><path d="M0 0H14.200V14.200H0ZM15.800 0H30V14.200H15.800ZM0 15.800H14.200V30H0ZM15.800 15.800H30V30H15.800Z" fill="url(#gWin)"/></svg>
    <div class="tb-search"><svg viewBox="0 0 20 20" fill="none" stroke="#ddd" stroke-width="1.900"><circle cx="9" cy="7.500" r="6.700"/><path d="M13.500 12.500 18.500 19"/></svg><span>Search</span></div>
    <div class="app"><svg viewBox="0 0 30 30"><rect y="9" width="22" height="19" rx="1.500" fill="#6d6d6d"/><rect x="7" y="1" width="23" height="20" rx="1.500" fill="#f2f2f2"/><path d="M7 9H22V21H8.500C7.500 21 7 20.500 7 19.500Z" fill="#b6b6b6"/></svg></div>
    <div class="app run"><svg><use href="#edge"/></svg></div>
    <div class="app"><svg viewBox="0 0 30 30"><path d="M8.500 7V2.500C8.500 1.500 9 1 10 1H20C21 1 21.500 1.500 21.500 2.500V7" fill="none" stroke="#30a9e6" stroke-width="2"/><rect x=".5" y="5" width="29" height="25" rx="3" fill="#f0f0f0"/><rect x="9.500" y="12" width="5" height="5" fill="#f25022"/><rect x="15.700" y="12" width="5" height="5" fill="#7fba00"/><rect x="9.500" y="18.200" width="5" height="5" fill="#00a4ef"/><rect x="15.700" y="18.200" width="5" height="5" fill="#ffb900"/></svg></div>
    <div class="app current"><svg viewBox="0 0 30 30"><path d="M0 3.500C0 2.500.5 2 1.500 2H10L12.500 5H30V12H0Z" fill="#d89f0c"/><rect y="5.500" width="30" height="23.500" rx="1" fill="url(#gFold)"/><path d="M5 29V23C5 21.500 6 20.500 7.500 20.500H22.500C24 20.500 25 21.500 25 23V29Z" fill="#0f7bd0"/><path d="M9 25H21" stroke="#0a4f94" stroke-width="1.600"/></svg></div>
    <div class="app"><svg><use href="#chrome"/></svg></div>
    <div class="app"><svg viewBox="0 0 30 30"><path d="M15 0 22 7 15 14 8 7Z" fill="#f07067"/><path d="M23 8 30 15 23 22 16 15Z" fill="#8fce5f"/><path d="M7 8 14 15 7 22 0 15Z" fill="#7db0fb"/><path d="M15 16 22 23 15 30 8 23Z" fill="#fbe07a"/><path d="M11 4 15 9V23M15 10 20.500 15" fill="none" stroke="#33302c" stroke-width="2"/><g fill="#33302c"><circle cx="15" cy="9.500" r="2.300"/><circle cx="20.500" cy="15.500" r="2.300"/><circle cx="15" cy="22" r="2.300"/></g></svg></div>
    <div class="app"><svg viewBox="0 0 30 30"><path d="M3 5 20 3 26 7V25L8 28 3 23Z" fill="#fff"/><path d="M8.500 9.500 24 8.300V23.500L9.500 25.500Z" fill="#fff" stroke="#111" stroke-width="1.300"/><path d="M5 6 19 4.500 23 7 9 8Z" fill="#111"/><text x="16.500" y="22.500" text-anchor="middle" font-size="16" font-weight="700" font-family="Liberation Serif,serif">N</text></svg></div>
    <div class="app run"><svg><use href="#brave"/></svg></div>
    <div class="app run"><svg viewBox="0 0 30 30"><rect y="4" width="30" height="22" rx="1.500" fill="#3d3d3d"/><path d="M0 8V5.500C0 4.500.5 4 1.500 4H28.500C29.500 4 30 4.500 30 5.500V8Z" fill="#999"/><path d="M0 4H18V8H0Z" fill="#bdbdbd"/><path d="M4 11 10 16 4 21.500" fill="none" stroke="#dcdcdc" stroke-width="2.600"/><path d="M13 22.500H23" stroke="#dcdcdc" stroke-width="2.400"/></svg></div>
    <div class="app run"><svg viewBox="0 0 30 30"><circle cx="15" cy="15" r="14.800" fill="#ff6c37"/><path d="M6.500 24.500 13 15 19 9.500 21 12 15 17.500Z" fill="#fff"/><circle cx="21.300" cy="8.300" r="2.800" fill="#fff"/></svg></div>
    <div class="app run"><svg viewBox="0 0 30 30"><path d="M21.500 0 30 3.500V26.500L21.500 30Z" fill="#2aa3ee"/><path d="M21.500 0 22.500 8 4.500 22 1.500 19.500Z" fill="#1c7fc9"/><path d="M21.500 30 22.500 22 4.500 8 1.500 10.500Z" fill="#1d8edb"/></svg></div>
    <div class="app run profile"><svg viewBox="0 0 36 36"><use href="#chrome" x="0" y="6" width="30" height="30"/><ellipse cx="25.500" cy="10" rx="9.500" ry="10" fill="#2e211e"/><ellipse cx="25" cy="8.500" rx="3.500" ry="5" fill="#c79b87"/><path d="M19 18C21 13 29 13 31 17L27 19.500Z" fill="#6e4c47"/></svg></div>
    <div class="app run"><svg viewBox="0 0 30 30"><rect x="2" y="2" width="26" height="26" rx="3" fill="url(#gPho)"/><path d="M2 25 15 12 28 24C28 27 27 28 25 28H5C3 28 2 27 2 25Z" fill="#2a9ff0"/><path d="M2 25 15 12 20 16.500 8 28H5C3 28 2 27 2 25Z" fill="#45c9fb"/><circle cx="22" cy="7.500" r="2.600" fill="#eef"/></svg></div>
  </div>
  <div class="tray">
    <svg class="tup" viewBox="0 0 16 16"><path d="M1.500 11.500 8 4.500 14.500 11.500" fill="none" stroke="#eee" stroke-width="1.700"/></svg>
    <div class="lang"><span>ENG</span><span>IN</span></div>
    <svg class="st" viewBox="0 0 20 20" fill="none" stroke="#eee" stroke-width="1.500"><path d="M.8 7.500C6 1.800 14 1.800 19.200 7.500M3.800 10.500C7.500 6.500 12.500 6.500 16.200 10.500M6.700 13.200C8.700 11 11.300 11 13.300 13.200"/><circle cx="10" cy="15.500" r="1.300" fill="#eee"/></svg>
    <svg class="st" viewBox="0 0 20 20" fill="none" stroke="#eee" stroke-width="1.300"><path d="M.8 7H4.500L9 3V17L4.500 13H.8ZM11.500 7C13 9 13 11 11.500 13M14 4.800C16.500 8 16.500 12 14 15.200M16.500 2.500C20.300 7 20.300 13 16.500 17.500"/></svg>
    <svg class="st" viewBox="0 0 20 20"><rect x="2" y="4" width="15.500" height="12.500" rx="2.500" fill="none" stroke="#eee" stroke-width="1.300"/><rect x="4" y="6" width="11.500" height="8.500" rx="1" fill="#eee"/><path d="M18 8.500H20V12.500H18Z" fill="#eee"/><path d="M5-.5-.3 7H2.500L1 12.500 7.500 5H4.500Z" fill="#eee" stroke="#202020" stroke-width=".8"/></svg>
    <div class="clock"><span>19:52</span><span>14-08-2025</span></div>
    <svg class="bell" viewBox="0 0 20 20"><path d="M2 15.500 3 13V8C3 4 6 1.500 9.500 1.500S16 4 16 8V13L17.500 15.500ZM7 16.500H12.500C12 19.500 7.500 19.500 7 16.500Z" fill="#eee"/><path d="M6.500 7.500H10.500L6.500 12.500H11" fill="none" stroke="#202020" stroke-width="1.400"/><path d="M12 .5H18.500V8H14Z" fill="#202020"/><path d="M13.500 1.500H17.500L13.500 6.500H18" fill="none" stroke="#eee" stroke-width="1.400"/></svg>
  </div>
</footer>
</body>
</html>
```
FILE: styles.css
```css
* { box-sizing: border-box; }
html, body { margin: 0; height: 100%; overflow: hidden; }
body { width: 1920px; height: 1080px; display: flex; flex-direction: column; font-family: "Open Sans", "Noto Sans", sans-serif; background: #202020; color: #fff; }
h1, p { margin: 0; }
svg { display: block; flex: none; }
.defs { position: absolute; }
.desktop { position: relative; height: 1020px; flex: none; overflow: hidden; }
.browser { height: 100%; display: flex; flex-direction: column; }

/* tab strip */
.tabstrip { height: 50px; flex: none; display: flex; align-items: center; background: #1f1e23; padding-left: 2px; }
.tab { width: 35px; height: 20px; flex: none; display: flex; align-items: center; justify-content: center; border-right: 1px solid #3e3e43; }
.tab svg { width: 24px; height: 24px; }
.tab.slim { width: 33.75px; }
.tab.audio { padding-left: 9px; }
.tab.last { border-right-color: transparent; }
.tab.active { width: 39px; height: 40px; margin-left: 1px; border: 0; border-radius: 9px; background: #353439; }
.newtab { width: 54px; display: flex; justify-content: center; }
.newtab svg { width: 24px; height: 24px; }
.winctl { margin-left: auto; display: flex; gap: 33px; padding-right: 17px; }
.winctl svg { width: 24px; height: 24px; }

/* toolbar */
.toolbar { height: 51px; flex: none; display: grid; grid-template-columns: 335px 805px 1fr; align-items: center; background: #3b3a3f; border-bottom: 1px solid #2a292e; }
.nav-buttons { display: flex; align-items: center; gap: 14px; padding-left: 15px; }
.nav-buttons svg { width: 24px; height: 24px; }
.nav-buttons .bookmark { margin-left: auto; margin-right: 17px; }
.urlbar { height: 40px; border-radius: 9px; background: #242328; display: flex; align-items: center; padding: 0 13px 0 10px; }
.site { width: 20px; height: 20px; }
.url { margin-left: 18px; margin-top: -1px; font-size: 16.300px; letter-spacing: -.1px; color: #e8e8ea; }
.share { width: 20px; height: 20px; margin-left: auto; }
.vsep { width: 1px; height: 20px; margin: 0 13px 0 11px; background: #77777b; }
.lion { width: 22px; height: 24px; }
.bat { width: 24px; height: 24px; margin-left: 19px; }
.extensions { display: flex; justify-content: flex-end; align-items: center; padding-right: 9px; }
.extensions span { width: 37.500px; display: flex; justify-content: center; }
.extensions svg { width: 23px; height: 23px; }
.tsep { width: 2px; height: 20px; margin: 0 10.300px 0 9.500px; background: #222126; }

/* page */
.viewport { flex: 1; display: flex; min-height: 0; }
.page { width: 1845px; background: #fff; padding-top: 21px; }
.card { width: 798px; height: 900px; margin: 0 auto; border-radius: 20px; overflow: hidden; background: #fff; box-shadow: 0 0 3px rgba(0,0,0,.25); }
.card-head { height: 165px; background: #2563eb; display: flex; flex-direction: column; align-items: center; padding-top: 20px; text-align: center; }
.head-icon { width: 50px; height: 50px; border-radius: 15px; background: rgba(255,255,255,.2); display: flex; align-items: center; justify-content: center; }
.head-icon svg { width: 25px; height: 25px; }
.card-head h1 { margin-top: 11px; line-height: 36px; font-size: 24px; font-weight: 700; letter-spacing: -.2px; }
.card-head p { margin-top: 5px; line-height: 24px; font-size: 16.600px; color: #dbeafe; }
.dropzone { margin: 20px 20px 0; height: 600px; border: 2px dashed #60a5fa; border-radius: 15px; background: #eff6ff; display: flex; flex-direction: column; align-items: center; padding-top: 30px; text-align: center; }
.drop-icon { width: 60px; height: 60px; border-radius: 15px; background: #dbeafe; display: flex; align-items: center; justify-content: center; }
.drop-icon svg { width: 28px; height: 24px; }
.drop-title { margin-top: 16px; line-height: 30px; font-size: 18.700px; font-weight: 600; color: #374151; white-space: nowrap; }
.drop-hint { margin-top: 2px; line-height: 24px; font-size: 14.150px; color: #6b7280; white-space: nowrap; }
.scroll { width: 19px; background: #2c2c2c; display: flex; flex-direction: column; align-items: center; padding-top: 6px; }
.arrow { border: 6px solid transparent; border-top: 0; border-bottom: 9px solid #9f9f9f; }
.thumb { width: 11px; height: 339px; margin-top: 8px; border-radius: 6px; background: #9f9f9f; }
.side { width: 56px; background: #3b3a3f; display: flex; flex-direction: column; align-items: center; padding: 3px 0 0 1px; gap: 21px; }
.side svg { width: 24px; height: 24px; }
.side .up { margin-bottom: -3px; }
.side .s { margin-top: 1px; }

/* floating pieces */
.share-drop { position: absolute; left: 572px; top: -1px; width: 775px; height: 31px; border: 1px solid #6a6a6a; border-radius: 0 0 10px 10px; background: #2c2c2c; color: #c8c8c8; font-size: 16.500px; line-height: 28px; text-align: center; }
.drag-ghost { position: absolute; left: 712px; top: 315px; width: 128px; height: 128px; border: 1.5px solid #333; border-radius: 4px; background: #fff; }
.drag-ghost svg { width: 128px; height: 128px; margin: -1px; }
.cursor { position: absolute; left: 795px; top: 451px; width: 16px; height: 16px; }

/* file explorer window */
.explorer { position: absolute; left: 320px; top: 479px; width: 1610px; height: 560px; border-radius: 10px 0 0 0; overflow: hidden; background: #191919; box-shadow: 0 0 0 1px rgba(100,100,100,.7), 0 3px 22px rgba(0,0,0,.42); font-size: 14.200px; }
.i20 { width: 20px; height: 20px; }
.ex-tabs { height: 50px; background: #202020; display: flex; align-items: flex-end; padding-left: 11px; }
.ex-tab { width: 300px; height: 40px; border-radius: 10px 10px 0 0; background: #2c2c2c; display: flex; align-items: center; padding: 0 20px 0 11px; }
.ex-tab b { margin-left: 13px; font-weight: 600; font-size: 14.200px; letter-spacing: -.05px; }
.ex-tab .close { width: 12px; height: 12px; margin-left: auto; }
.plus { width: 12px; height: 12px; margin: 0 0 13px 23px; }
.ex-nav { height: 61px; background: #2c2c2c; border-bottom: 1px solid #3c3c3c; display: flex; align-items: center; padding-left: 4px; }
.ex-nav span { width: 60px; display: flex; justify-content: center; }
.ex-nav span svg { width: 16px; height: 16px; }
.address { width: 1129px; height: 40px; margin-left: 8px; border-radius: 5px; background: #383838; display: flex; align-items: center; padding-left: 17px; }
.crumb { width: 12px; height: 12px; margin: 0 22px 0 21px; }
.address em { font-style: normal; font-size: 16.700px; letter-spacing: -.1px; }
.search { width: 220px; height: 40px; margin-left: 10px; border-radius: 5px; background: #383838; padding-left: 19px; line-height: 41px; font-size: 16.600px; color: #ccc; }
.ex-cmd { height: 58px; border-bottom: 1px solid #3c3c3c; display: flex; align-items: center; padding-top: 1px; }
.ex-cmd span { width: 60px; display: flex; justify-content: center; }
.ex-cmd span svg { width: 20px; height: 20px; }
.ex-cmd .first { margin-left: 2px; }
.ex-cmd .more { margin-left: 1px; }
.bar { width: 1px; height: 40px; background: #333; }
.b2 { margin-left: 3px; }
.grp { display: flex; align-items: center; }
.grp label { margin: 2px 0 0 10px; letter-spacing: -.2px; }
.c { width: 12px; height: 12px; margin-left: 7px; color: #aaa; }
.new { width: 119px; padding-left: 22px; }
.new label { margin-left: 11px; }
.sort { width: 129px; padding-left: 19px; }
.view { width: 98px; }
.ex-body { display: flex; height: 391px; }
.places { width: 199px; padding: 8px 3px 0; border-right: 3px solid #242424; }
.place { height: 40px; width: 192px; overflow: hidden; border-radius: 3px; display: grid; grid-template-columns: 40px 20px 1fr 28px; align-items: center; }
.place svg { width: 20px; height: 20px; }
.place i { display: flex; justify-content: center; padding-right: 3px; }
.place .exp { width: 13px; height: 13px; }
.place span { padding-left: 5px; white-space: nowrap; }
.place .pin { width: 14px; height: 14px; margin-left: 11px; }
.place.on { background: #333; box-shadow: inset 0 0 0 1px #3a3a3a; }
.places hr { width: 172px; height: 1px; border: 0; margin: 20px 0 19px 10px; background: #444; }
.files { width: 780px; display: flex; flex-direction: column; }
.cols, .row, .group { flex: none; }
.cols { display: grid; grid-template-columns: 341px 180px 150px 100px; height: 32px; color: #dedede; margin-bottom: 8px; }
.cols > div { position: relative; border-right: 1px solid #5c5c5c; padding-left: 7px; line-height: 34px; }
.cols .nm { padding-left: 38px; }
.sortmark { position: absolute; left: 82px; top: -2px; width: 14px; height: 12px; color: #999; }
.group { height: 28px; line-height: 28px; display: flex; align-items: center; padding-left: 8px; gap: 4px; }
.group svg { width: 15px; height: 15px; color: #999; }
.row { display: grid; grid-template-columns: 322px 180px 150px 95px; width: 747px; height: 31px; margin: 3px 0 3px 19px; line-height: 31px; border-radius: 3px; color: #dedede; white-space: nowrap; }
.row.on { background: #333; }
.row > div { padding-left: 7px; }
.row .nm { display: flex; align-items: center; gap: 5px; padding-left: 5px; color: #fff; letter-spacing: -.03px; }
.row .nm.tight { letter-spacing: -.1px; }
.row .nm svg { width: 20px; height: 20px; margin-top: -3px; }
.row .sz { padding: 0 5px 0 0; text-align: right; }

/* taskbar */
.taskbar { position: relative; height: 60px; flex: none; background: #202020; border-top: 1px solid #454545; display: grid; grid-template-columns: 446px 1fr 330px; align-items: center; font-size: 14.200px; }
.weather { display: flex; padding: 0 0 2px 24px; gap: 8px; }
.wicon { position: relative; width: 32px; height: 36px; display: flex; align-items: center; }
.wicon svg { width: 32px; height: 24px; }
.badge { position: absolute; left: 15px; top: -4px; width: 19px; height: 20px; border-radius: 10px; background: #ff99a4; color: #111; font-size: 14px; line-height: 20px; text-align: center; }
.wtext { display: flex; flex-direction: column; line-height: 20px; font-size: 14.600px; }
.wtext strong { font-weight: 400; font-size: 14.200px; }
.wtext span { color: #c4c4c4; }
.apps { display: flex; align-items: center; height: 58px; padding-left: 1px; }
.start { width: 30px; height: 30px; }
.tb-search { width: 275px; height: 40px; margin: 0 5px 0 16px; border-radius: 20px; background: #3c3c3c; border: 1px solid #505050; display: flex; align-items: center; gap: 11px; padding-left: 14px; font-size: 16.200px; color: #ccc; }
.tb-search svg { width: 20px; height: 20px; }
.app { width: 50px; height: 50px; margin-right: 5px; border-radius: 6px; display: flex; align-items: center; justify-content: center; position: relative; }
.app svg { width: 30px; height: 30px; }
.app.profile svg { width: 36px; height: 36px; margin: -6px 0 0 6px; }
.app.current { background: #2f2e2f; border: 1px solid #383838; }
.app.run::after, .app.current::after { content: ""; position: absolute; bottom: 1px; left: 21px; width: 8px; height: 4px; border-radius: 2px; background: #9a9a9a; }
.app.current::after { left: 14px; width: 20px; background: #dba0e2; }
.tray { display: flex; align-items: center; justify-content: flex-end; padding: 0 25px 1px 0; }
.tup { width: 16px; height: 16px; margin-right: 24px; }
.lang, .clock { display: flex; flex-direction: column; line-height: 20px; }
.lang { align-items: center; width: 32px; margin-right: 21px; font-size: 14.500px; }
.st { width: 20px; height: 20px; margin-right: 10px; }
.clock { align-items: flex-end; width: 88px; margin-right: 9px; font-size: 14.900px; }
.bell { width: 20px; height: 20px; }
```
